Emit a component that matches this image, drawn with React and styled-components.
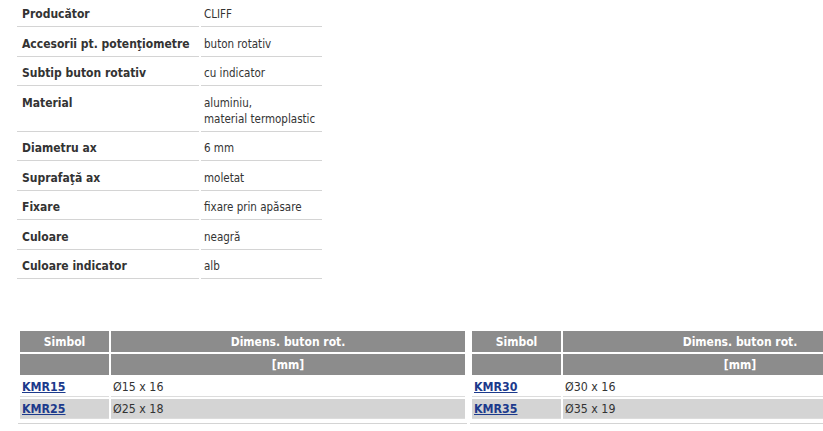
import React from "react";
import styled, { createGlobalStyle } from "styled-components";

const GlobalStyle = createGlobalStyle`
    html, body {
        margin: 0;
        padding: 0;
        background: #ffffff;
        overflow: hidden;
    }
    body {
        font-family: "DejaVu Sans Condensed", "DejaVu Sans", Tahoma, sans-serif;
        font-size: 12px;
        color: #333333;
    }
`;

const Page = styled.div`
    width: 823px;
    height: 431px;
    padding-left: 17px;
    box-sizing: border-box;
    overflow: hidden;
`;

const SpecList = styled.div`
    display: grid;
    grid-template-columns: 182px 121px;
    column-gap: 2px;
    margin-top: -2.5px;
    width: 305px;
`;

const SpecCell = styled.div`
    padding: 8.5px 0 4px ${({ $value }) => ($value ? "3px" : "5px")};
    line-height: 16px;
    border-bottom: 1px solid #d4d4d4;
    font-weight: ${({ $value }) => ($value ? "normal" : "bold")};
    font-size: ${({ $value }) => ($value ? "11.5px" : "12px")};
    color: #333333;
`;

const TablesRow = styled.div`
    display: flex;
    gap: 3px;
    margin-top: 50px;
    margin-left: 1px;
`;

const SizeTable = styled.table`
    flex: 0 0 auto;
    width: 449px;
    border-collapse: separate;
    border-spacing: 2px;
    padding-bottom: 2px;
    border-bottom: 1px solid #d4d4d4;
    table-layout: fixed;
`;

const HeadCell = styled.th`
    background: #8c8c8c;
    color: #ffffff;
    font-weight: bold;
    font-size: 12px;
    height: 20px;
    padding: 1px 0 0;
    text-align: center;
    line-height: 19px;
`;

const DataCell = styled.td`
    background: ${({ $shade }) => ($shade ? "#d4d4d4" : "#ffffff")};
    height: 17px;
    padding: 2px 2px 0;
    line-height: 17px;
    font-size: 12.3px;
    color: #333333;
    border-bottom: 1px solid #dcdcdc;
`;

const PartLink = styled.a`
    color: #1c3a8c;
    font-weight: bold;
    text-decoration: underline;
`;

const specs = [
    ["Producător", ["CLIFF"]],
    ["Accesorii pt. potenţiometre", ["buton rotativ"]],
    ["Subtip buton rotativ", ["cu indicator"]],
    ["Material", ["aluminiu,", "material termoplastic"]],
    ["Diametru ax", ["6 mm"]],
    ["Suprafaţă ax", ["moletat"]],
    ["Fixare", ["fixare prin apăsare"]],
    ["Culoare", ["neagră"]],
    ["Culoare indicator", ["alb"]],
];

const tables = [
    [["KMR15", "Ø15 x 16"], ["KMR25", "Ø25 x 18"]],
    [["KMR30", "Ø30 x 16"], ["KMR35", "Ø35 x 19"]],
];

const Sizes = ({ rows }) => (
    <SizeTable>
        <colgroup>
            <col style={{ width: "89px" }} />
            <col />
        </colgroup>
        <thead>
            <tr>
                <HeadCell>Simbol</HeadCell>
                <HeadCell>Dimens. buton rot.</HeadCell>
            </tr>
            <tr>
                <HeadCell />
                <HeadCell>[mm]</HeadCell>
            </tr>
        </thead>
        <tbody>
            {rows.map(([code, size], i) => (
                <tr key={code}>
                    <DataCell $shade={i % 2 === 1}>
                        <PartLink href="#">{code}</PartLink>
                    </DataCell>
                    <DataCell $shade={i % 2 === 1}>{size}</DataCell>
                </tr>
            ))}
        </tbody>
    </SizeTable>
);

const App = () => (
    <>
        <GlobalStyle />
        <Page>
            <SpecList>
                {specs.map(([label, value]) => (
                    <React.Fragment key={label}>
                        <SpecCell>{label}</SpecCell>
                        <SpecCell $value>
                            {value.map((line) => (
                                <div key={line}>{line}</div>
                            ))}
                        </SpecCell>
                    </React.Fragment>
                ))}
            </SpecList>
            <TablesRow>
                {tables.map((rows, i) => (
                    <Sizes key={i} rows={rows} />
                ))}
            </TablesRow>
        </Page>
    </>
);

export default App;
